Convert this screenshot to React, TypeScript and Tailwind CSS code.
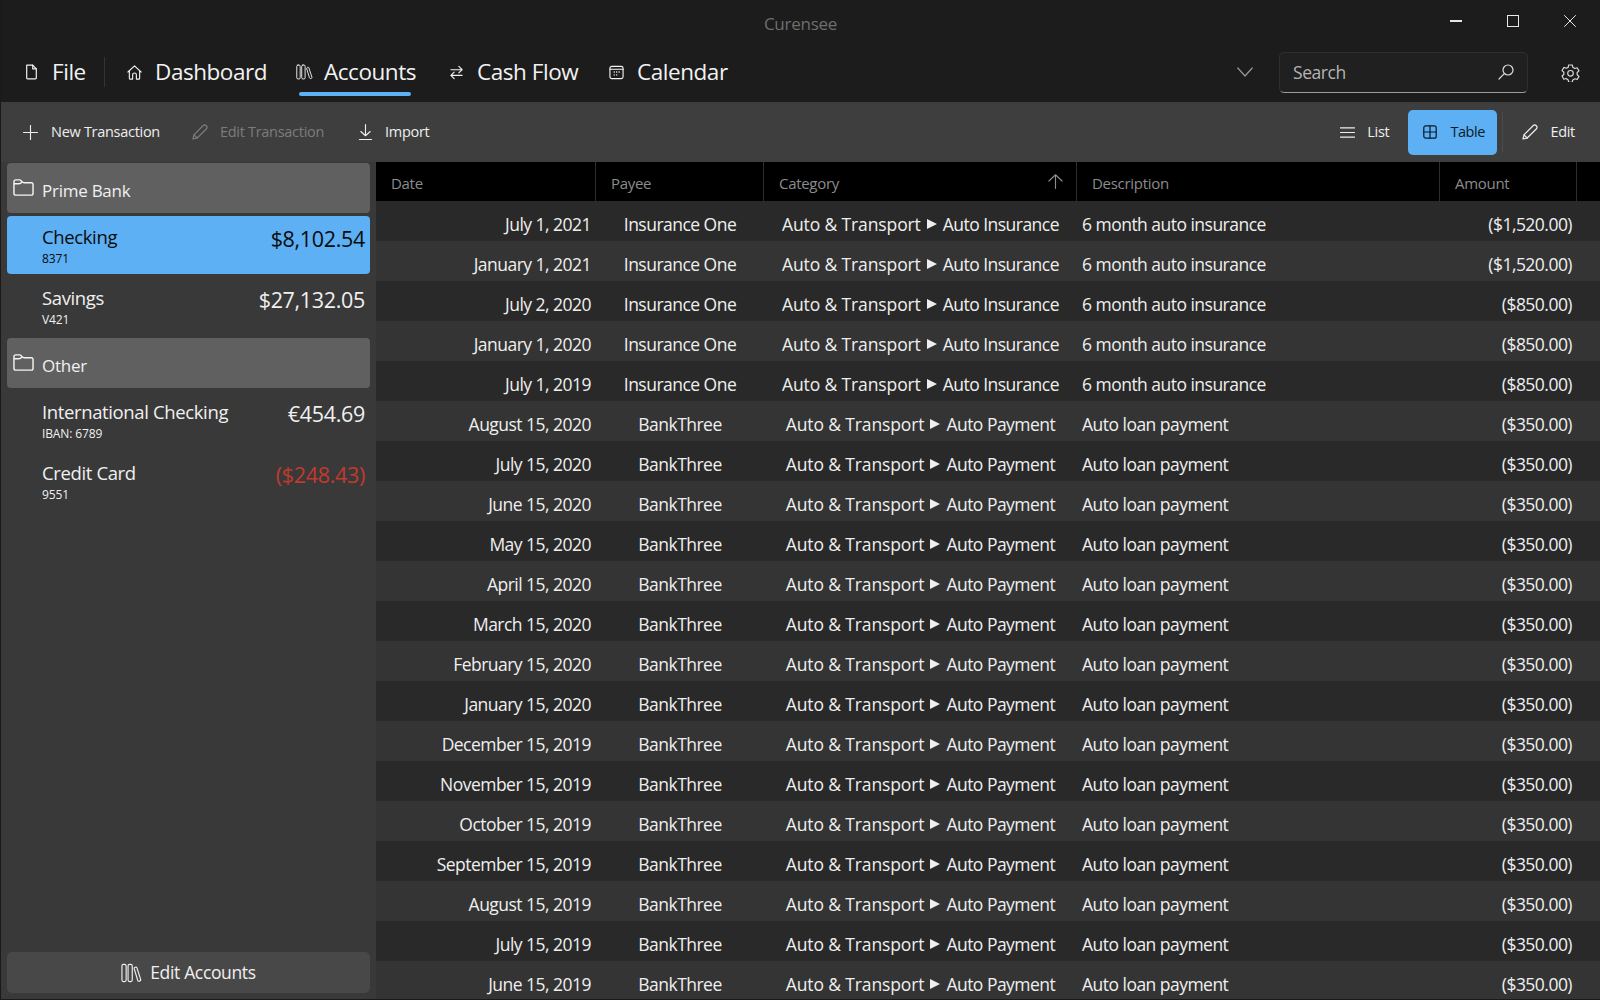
import * as React from "react";

type IconProps = { className?: string };

const base = {
  fill: "none",
  stroke: "currentColor",
  strokeWidth: 1.2,
  strokeLinecap: "round" as const,
  strokeLinejoin: "round" as const,
};

const FileIcon = ({ className }: IconProps) => (
  <svg viewBox="0 0 16 20" className={className} {...base} strokeWidth={1.5}>
    <path d="M2 1.500h7.500L14 6v11.500a1 1 0 0 1-1 1H3a1 1 0 0 1-1-1v-16z" />
    <path d="M9.500 1.500V6H14" />
  </svg>
);

const HomeIcon = ({ className }: IconProps) => (
  <svg viewBox="0 0 16 16" className={className} {...base}>
    <path d="M1 7.500 8 1l7 6.500" />
    <path d="M2.500 6.500V14a1 1 0 0 0 1 1H6v-4.500a2 2 0 0 1 4 0V15h2.500a1 1 0 0 0 1-1V6.500" />
  </svg>
);

const BooksIcon = ({ className }: IconProps) => (
  <svg viewBox="0 0 22 20" className={className} {...base}>
    <rect x="1" y="1" width="4.400" height="18" rx="1.600" />
    <rect x="7.400" y="1" width="4.400" height="18" rx="1.600" />
    <path d="M13.700 5.200c-.3-1.100 2.400-2 2.900-.8l4 12.300c.5 1.500-2.300 2.900-3 1.200z" />
  </svg>
);

const SwapIcon = ({ className }: IconProps) => (
  <svg viewBox="0 0 16 16" className={className} {...base}>
    <path d="M2 5h12M10.500 1.500 14 5l-3.500 3.500" />
    <path d="M14 11H2M5.500 7.500 2 11l3.500 3.500" />
  </svg>
);

const CalendarIcon = ({ className }: IconProps) => (
  <svg viewBox="0 0 16 16" className={className} {...base}>
    <rect x="1" y="1.500" width="14" height="13" rx="2" />
    <path d="M1 4.500h14" />
    <path d="M5 7.500h1.200M7.600 7.500h1.200M10.200 7.500h1.200M5 10.500h1.200M7.600 10.500h1.200" strokeWidth={1.5} strokeLinecap="butt" />
  </svg>
);

const FolderIcon = ({ className }: IconProps) => (
  <svg viewBox="0 0 22 18" className={className} {...base} strokeWidth={1.5}>
    <path d="M1 4V3a2 2 0 0 1 2-2h4c1 0 1.500 1 2.500 2s1 1 2 1H19a2 2 0 0 1 2 2v9a2 2 0 0 1-2 2H3a2 2 0 0 1-2-2V4zM1 5h5c1.500 0 2.500-.5 3.500-2" />
  </svg>
);

const PlusIcon = ({ className }: IconProps) => (
  <svg viewBox="0 0 16 16" className={className} {...base}>
    <path d="M8 .5v15M.5 8h15" />
  </svg>
);

const PencilIcon = ({ className }: IconProps) => (
  <svg viewBox="0 0 16 16" className={className} {...base}>
    <path d="M1 15l1-4.200L11.300 1.500a1.900 1.900 0 0 1 2.700 0l.5.5a1.900 1.900 0 0 1 0 2.700L5.200 14z" />
    <path d="M2 10.800 5.200 14" />
  </svg>
);

const DownloadIcon = ({ className }: IconProps) => (
  <svg viewBox="0 0 16 18" className={className} {...base}>
    <path d="M8 1v12M3 8.500 8 13l5-4.500M1.500 17h13" />
  </svg>
);

const ListIcon = ({ className }: IconProps) => (
  <svg viewBox="0 0 16 14" className={className} {...base} strokeWidth={1.3}>
    <path d="M.5 2h15M.5 7h15M.5 12h15" />
  </svg>
);

const TableIcon = ({ className }: IconProps) => (
  <svg viewBox="0 0 14 14" className={className} {...base}>
    <rect x=".8" y=".8" width="12.400" height="12.400" rx="2" />
    <path d="M7 .8v12.400M.8 7h12.400" />
  </svg>
);

const SearchIcon = ({ className }: IconProps) => (
  <svg viewBox="0 0 16 16" className={className} {...base}>
    <circle cx="10" cy="6" r="5" />
    <path d="M6.300 9.700 1 15" />
  </svg>
);

const GearIcon = ({ className }: IconProps) => (
  <svg viewBox="0 0 24 24" className={className} {...base} strokeWidth={1.500}>
    <path d="M9.700 2.500h4.600l.6 3 2.600 1.500 2.900-1 2.300 4-2.300 2v2.900l2.300 2-2.300 4-2.900-1-2.600 1.500-.6 3H9.700l-.6-3L6.500 19.500l-2.900 1-2.300-4 2.300-2v-2.900l-2.300-2 2.300-4 2.900 1L9.100 5.500z" />
    <circle cx="12" cy="13" r="3.500" />
  </svg>
);

const ArrowUpIcon = ({ className }: IconProps) => (
  <svg viewBox="0 0 16 16" className={className} {...base}>
    <path d="M8 15.500V.8M1 7.500 8 .8l7 6.700" />
  </svg>
);

type Tx = {
  date: string;
  payee: string;
  sub: string;
  description: string;
  amount: string;
};

const insurance = (date: string, amount: string): Tx => ({
  date,
  payee: "Insurance One",
  sub: "Auto Insurance",
  description: "6 month auto insurance",
  amount,
});

const loan = (date: string): Tx => ({
  date,
  payee: "BankThree",
  sub: "Auto Payment",
  description: "Auto loan payment",
  amount: "($350.00)",
});

const TRANSACTIONS: Tx[] = [
  insurance("July 1, 2021", "($1,520.00)"),
  insurance("January 1, 2021", "($1,520.00)"),
  insurance("July 2, 2020", "($850.00)"),
  insurance("January 1, 2020", "($850.00)"),
  insurance("July 1, 2019", "($850.00)"),
  loan("August 15, 2020"),
  loan("July 15, 2020"),
  loan("June 15, 2020"),
  loan("May 15, 2020"),
  loan("April 15, 2020"),
  loan("March 15, 2020"),
  loan("February 15, 2020"),
  loan("January 15, 2020"),
  loan("December 15, 2019"),
  loan("November 15, 2019"),
  loan("October 15, 2019"),
  loan("September 15, 2019"),
  loan("August 15, 2019"),
  loan("July 15, 2019"),
  loan("June 15, 2019"),
];

function NavItem({
  icon,
  label,
  width,
  active,
}: {
  icon: React.ReactNode;
  label: string;
  width: string;
  active?: boolean;
}) {
  return (
    <div className={`relative flex h-full items-center ${width}`}>
      <div className="flex w-[28px] shrink-0 items-center">{icon}</div>
      <span className="text-[22.500px] tracking-[-0.02em] text-[#f2f2f2]">{label}</span>
      {active && (
        <div className="absolute bottom-0 left-[3px] h-[4px] w-[112px] rounded-full bg-[#5cb0f3]" />
      )}
    </div>
  );
}

function GroupHeader({ name, first }: { name: string; first?: boolean }) {
  return (
    <div
      className={`flex h-[50px] items-center rounded-[4px] bg-[#606060] pl-[6px] pt-[5px] ${first ? "" : "mt-[3px]"}`}
    >
      <FolderIcon className="h-[19px] w-[21px] -translate-y-[3px] text-[#f4f4f4]" />
      <span className="ml-[8px] text-[17px] tracking-[-0.015em] text-[#f0f0f0]">{name}</span>
    </div>
  );
}

function AccountRow({
  name,
  sub,
  amount,
  selected,
  negative,
}: {
  name: string;
  sub: string;
  amount: string;
  selected?: boolean;
  negative?: boolean;
}) {
  const tone = selected ? "text-[#0b0b0b]" : "text-[#f0f0f0]";
  const amountTone = negative ? "text-[#c2392d]" : tone;
  return (
    <div
      className={`mt-[3px] flex h-[58px] justify-between rounded-[4px] pl-[35px] pr-[5px] ${selected ? "bg-[#5cb0f3]" : ""}`}
    >
      <div className="pt-[7px]">
        <div className={`text-[18.500px] leading-[28px] tracking-[-0.02em] ${tone}`}>{name}</div>
        <div className={`mt-[1px] text-[12px] leading-[14px] tracking-[-0.01em] ${tone}`}>{sub}</div>
      </div>
      <div className={`pt-[8px] text-[21.500px] leading-[30px] tracking-[-0.015em] ${amountTone}`}>{amount}</div>
    </div>
  );
}

function HeaderCell({ label, width, sorted }: { label: string; width: string; sorted?: boolean }) {
  return (
    <div className={`flex h-full shrink-0 items-center justify-between border-r border-[#2e2e2e] pl-[15px] pr-[13px] ${width}`}>
      <span className="pt-[3px] text-[15px] tracking-[-0.02em] text-[#8c8c8c]">{label}</span>
      {sorted && <ArrowUpIcon className="h-[15px] w-[15px] text-[#8c8c8c]" />}
    </div>
  );
}

function TxRow({ tx, odd }: { tx: Tx; odd: boolean }) {
  return (
    <div className={`flex h-[40px] items-center pt-[6px] text-[17.500px] tracking-[-0.03em] text-[#efefef] ${odd ? "bg-[#343434]" : "bg-[#292929]"}`}>
      <div className="w-[215px] shrink-0 text-right">{tx.date}</div>
      <div className="ml-[5px] w-[168px] shrink-0 text-center">{tx.payee}</div>
      <div className="flex w-[313px] shrink-0 items-center justify-center">
        <span className="tracking-[-0.007em]">Auto &amp; Transport</span>
        <svg viewBox="0 0 12 12" className="mx-[5px] h-[12px] w-[12px] fill-current">
          <path d="M1 1l10 5-10 5z" />
        </svg>
        <span>{tx.sub}</span>
      </div>
      <div className="w-[363px] shrink-0 pl-[5px]">{tx.description}</div>
      <div className="w-[132px] shrink-0 text-right">{tx.amount}</div>
    </div>
  );
}

function ToolButton({
  icon,
  label,
  gap,
  disabled,
}: {
  icon: React.ReactNode;
  label: string;
  gap: string;
  disabled?: boolean;
}) {
  return (
    <div className={`flex items-center ${gap} ${disabled ? "text-[#7c7c7c]" : "text-[#eeeeee]"}`}>
      {icon}
      <span className="text-[14.500px] tracking-[-0.02em]">{label}</span>
    </div>
  );
}

export default function App() {
  return (
    <div
      className="flex h-[1000px] w-[1600px] flex-col overflow-hidden bg-[#1a1a1a] pb-[1px] pl-[1px]"
      style={{ fontFamily: '"Open Sans", "Noto Sans", sans-serif' }}
    >
      <header className="h-[102px] shrink-0 bg-[#1c1c1c] pb-[6px]">
        <div className="relative flex h-[48px] items-start justify-end">
          <div className="absolute inset-x-0 top-[11px] text-center text-[17px] tracking-[-0.015em] text-[#6e6e6e]">
            Curensee
          </div>
          <div className="flex items-start gap-[45px] pr-[24px] pt-[15px] text-[#e8e8e8]">
            <div className="mt-[5px] h-[1.500px] w-[12px] bg-current" />
            <div className="h-[12px] w-[12px] border-[1.200px] border-current" />
            <svg viewBox="0 0 12 12" className="h-[12px] w-[12px]" {...base} strokeWidth={1}>
              <path d="M.5.500l11 11M11.500.500l-11 11" />
            </svg>
          </div>
        </div>
        <div className="flex h-[48px] items-center">
          <div className="flex w-[103px] items-center pl-[24px]">
            <FileIcon className="mr-[14px] h-[16px] w-[13px] text-[#f2f2f2]" />
            <span className="text-[22.500px] tracking-[-0.02em] text-[#f2f2f2]">File</span>
          </div>
          <div className="mr-[22px] h-[30px] w-px bg-[#333333]" />
          <NavItem width="w-[169px]" label="Dashboard" icon={<HomeIcon className="h-[15px] w-[15px] text-[#f2f2f2]" />} />
          <NavItem width="w-[153px]" label="Accounts" active icon={<BooksIcon className="h-[16px] w-[17px] text-[#f2f2f2]" />} />
          <NavItem width="w-[160px]" label="Cash Flow" icon={<SwapIcon className="h-[15px] w-[15px] text-[#f2f2f2]" />} />
          <NavItem width="w-[130px]" label="Calendar" icon={<CalendarIcon className="h-[15px] w-[15px] text-[#f2f2f2]" />} />
          <div className="ml-auto flex items-center">
            <svg viewBox="0 0 16 10" className="mr-[26px] h-[10px] w-[16px] text-[#9a9a9a]" {...base}>
              <path d="M.8 1 8 9l7.200-8" />
            </svg>
            <div className="flex h-[41px] w-[249px] items-center justify-between rounded-[5px] border border-[#2f2f2f] border-b-[#9c9c9c] bg-[#202020] pl-[13px] pr-[13px]">
              <span className="text-[17.500px] tracking-[-0.025em] text-[#b4b4b4]">Search</span>
              <SearchIcon className="h-[16px] w-[16px] text-[#dddddd]" />
            </div>
            <GearIcon className="ml-[33px] mr-[20px] h-[19px] w-[19px] text-[#d8d8d8]" />
          </div>
        </div>
      </header>

      <div className="flex h-[60px] shrink-0 items-center bg-[#3e3e3e] pl-[22px]">
        <ToolButton gap="gap-[13px]" label="New Transaction" icon={<PlusIcon className="h-[15px] w-[15px]" />} />
        <div className="ml-[32px]">
          <ToolButton disabled gap="gap-[12px]" label="Edit Transaction" icon={<PencilIcon className="h-[16px] w-[16px]" />} />
        </div>
        <div className="ml-[34px]">
          <ToolButton gap="gap-[12px]" label="Import" icon={<DownloadIcon className="h-[18px] w-[15px]" />} />
        </div>
        <div className="ml-auto flex items-center">
          <ToolButton gap="gap-[12px]" label="List" icon={<ListIcon className="h-[13px] w-[15px]" />} />
          <div className="ml-[19px] flex h-[45px] w-[89px] items-center gap-[13px] rounded-[5px] bg-[#5cb0f3] pl-[15px] text-[#0c1a26]">
            <TableIcon className="h-[14px] w-[14px]" />
            <span className="text-[14.500px] tracking-[-0.03em]">Table</span>
          </div>
          <div className="ml-[5px] h-[40px] w-px bg-[#4c4c4c]" />
          <div className="ml-[19px] mr-[25px]">
            <ToolButton gap="gap-[12px]" label="Edit" icon={<PencilIcon className="h-[16px] w-[16px]" />} />
          </div>
        </div>
      </div>

      <div className="flex min-h-0 flex-1">
        <aside className="flex w-[375px] shrink-0 flex-col bg-[#393939] pb-[6px] pl-[6px] pr-[6px] pt-[1px]">
          <GroupHeader first name="Prime Bank" />
          <AccountRow selected name="Checking" sub="8371" amount="$8,102.54" />
          <AccountRow name="Savings" sub="V421" amount="$27,132.05" />
          <GroupHeader name="Other" />
          <AccountRow name="International Checking" sub="IBAN: 6789" amount="€454.69" />
          <AccountRow negative name="Credit Card" sub="9551" amount="($248.43)" />
          <div className="mt-auto flex h-[41px] items-center justify-center gap-[8px] rounded-[5px] bg-[#484848] text-[#f0f0f0]">
            <BooksIcon className="h-[20px] w-[21px]" />
            <span className="text-[17.500px] tracking-[-0.02em]">Edit Accounts</span>
          </div>
        </aside>
        <main className="min-w-0 flex-1 overflow-hidden bg-[#2b2b2b]">
          <div className="flex h-[39px] items-center bg-black">
            <HeaderCell width="w-[220px]" label="Date" />
            <HeaderCell width="w-[168px]" label="Payee" />
            <HeaderCell width="w-[313px]" label="Category" sorted />
            <HeaderCell width="w-[363px]" label="Description" />
            <HeaderCell width="w-[137px]" label="Amount" />
          </div>
          {TRANSACTIONS.map((tx, i) => (
            <TxRow key={tx.date} tx={tx} odd={i % 2 === 1} />
          ))}
        </main>
      </div>
    </div>
  );
}
